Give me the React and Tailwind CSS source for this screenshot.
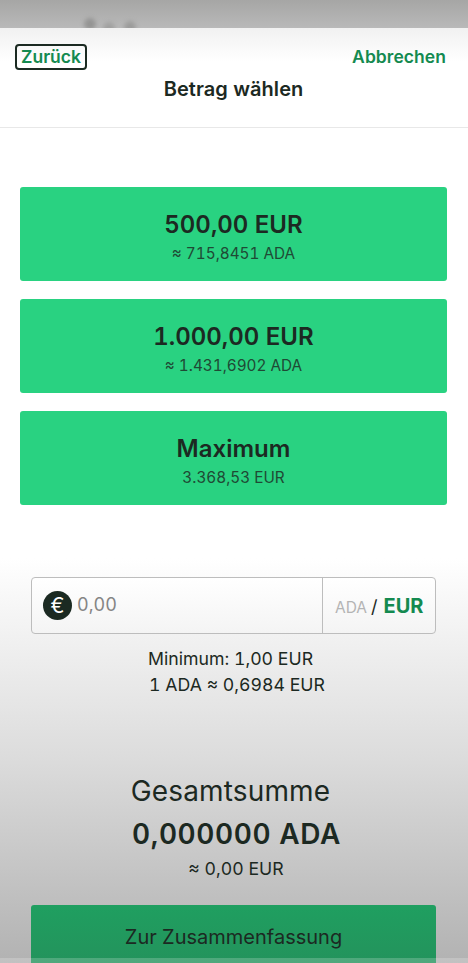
const presets = [
  { title: '500,00 EUR', sub: '≈ 715,8451 ADA' },
  { title: '1.000,00 EUR', sub: '≈ 1.431,6902 ADA' },
  { title: 'Maximum', sub: '3.368,53 EUR' },
];

function StatusBar() {
  return (
    <div className="relative h-[28px] shrink-0 overflow-hidden bg-linear-to-b from-[#a6a6a5] to-[#b9b9b9]">
      <span className="absolute left-[84px] top-[18px] size-[12px] rounded-full bg-[#949493] blur-[2px]" />
      <span className="absolute left-[103px] top-[22px] size-[12px] rounded-full bg-[#a1a1a0] blur-[2px]" />
      <span className="absolute left-[124px] top-[21px] size-[12px] rounded-full bg-[#9c9c9b] blur-[2px]" />
    </div>
  );
}

function Header() {
  return (
    <header className="h-[100px] shrink-0 border-b border-[#e8e8e8] bg-linear-to-b from-[#f1f1f1] to-white to-[34px] px-[15px] pt-[16px]">
      <div className="flex items-center justify-between">
        <button className="flex h-[26px] w-[72px] items-center justify-center whitespace-nowrap rounded-[4px] border-2 border-[#1b2a22] text-[17.5px] font-semibold leading-[22px] text-[#148a50]">
          Zurück
        </button>
        <button className="mr-[7px] whitespace-nowrap text-[17.5px] font-semibold leading-[24px] tracking-[0.05px] text-[#148a50]">
          Abbrechen
        </button>
      </div>
      <h1 className="-ml-px mt-[5px] text-center text-[20px] font-semibold leading-[28px] tracking-[0.05px]">
        Betrag wählen
      </h1>
    </header>
  );
}

export default function App() {
  return (
    <div className="flex h-[963px] w-[468px] flex-col overflow-hidden bg-white font-['Inter',sans-serif] tabular-nums text-[#1c2922]">
      <StatusBar />
      <Header />
      <main className="relative flex flex-1 flex-col bg-linear-to-b from-white from-[430px] via-[#dcdcdc] via-[630px] to-[#b2b2b2]">
        <section className="mx-[20px] mt-[59px] flex flex-col gap-[18px]">
          {presets.map((p) => (
            <button
              key={p.title}
              className="flex h-[94px] w-[427px] flex-col items-center rounded-[3px] bg-[#29d281] pt-[22px]"
            >
              <span className="text-[24px] font-semibold leading-[32px]">{p.title}</span>
              <span className="mt-[3px] text-[15.3px] leading-[20px] text-[#1f4a35]">{p.sub}</span>
            </button>
          ))}
        </section>

        <section className="mx-[31px] mt-[72px] flex h-[57px] w-[405px] rounded-[4px] border border-[#bdbdbd] bg-linear-to-b from-white to-[#f4f4f4]">
          <div className="flex flex-1 items-center pl-[11px]">
            <span className="flex size-[29px] items-center justify-center rounded-full bg-[#1b2a22] text-[21px] leading-none text-white">
              €
            </span>
            <span className="-mt-[2px] ml-[5px] text-[18px] leading-[24px] text-[#858585]">0,00</span>
          </div>
          <div className="flex w-[113px] items-baseline whitespace-nowrap border-l border-[#bdbdbd] pl-[12px] pt-[13px]">
            <span className="text-[15.5px] text-[#b4b4b4]">ADA</span>
            <span className="ml-[4px] text-[18px]">/</span>
            <span className="ml-[6px] text-[20px] font-bold text-[#148a50]">EUR</span>
          </div>
        </section>

        <div className="mt-[12px] flex flex-col items-center text-[17.7px] leading-[26.5px]">
          <p className="-ml-[7px]">Minimum: 1,00 EUR</p>
          <p className="ml-[6px] -mt-px">1 ADA ≈ 0,6984 EUR</p>
        </div>

        <section className="mt-[74px] flex flex-col items-center">
          <h2 className="-ml-[7px] text-[28px] leading-[38px] tracking-[0.15px]">Gesamtsumme</h2>
          <p className="ml-[5px] mt-[2px] text-[28px] font-semibold leading-[44px] tracking-[0.6px]">0,000000 ADA</p>
          <p className="ml-[4px] text-[17.7px] leading-[26px]">≈ 0,00 EUR</p>
        </section>

        <button className="mx-[31px] mt-[23px] h-[58px] w-[405px] rounded-t-[3px] bg-linear-to-b from-[#1f9f60] to-[#23935c] pt-[6px] text-[20px]">
          Zur Zusammenfassung
        </button>
        <div className="absolute inset-x-0 bottom-0 h-[5px] bg-white/20" />
      </main>
    </div>
  );
}
